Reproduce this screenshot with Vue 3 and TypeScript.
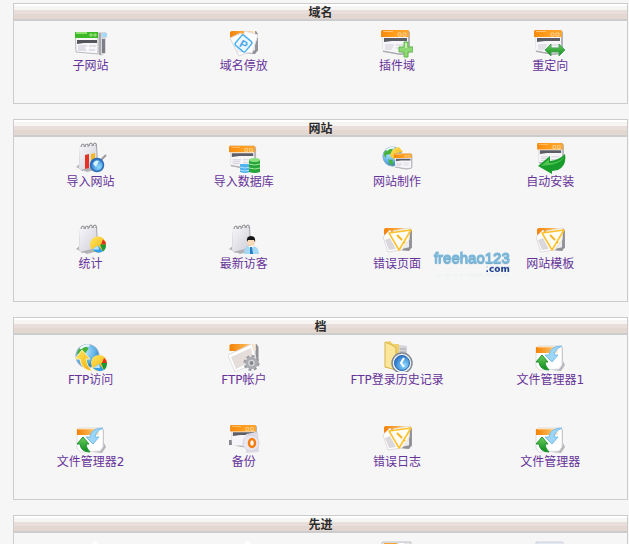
<script setup lang="ts">
interface Tool {
  icon: string
  label?: string
}

interface Section {
  title: string
  tools: Tool[]
  watermark?: boolean
}

const sections: Section[] = [
  {
    title: '域名',
    tools: [
      { icon: 'subsite', label: '子网站' },
      { icon: 'parked', label: '域名停放' },
      { icon: 'addon', label: '插件域' },
      { icon: 'redirect', label: '重定向' },
    ],
  },
  {
    title: '网站',
    watermark: true,
    tools: [
      { icon: 'import-site', label: '导入网站' },
      { icon: 'import-db', label: '导入数据库' },
      { icon: 'builder', label: '网站制作' },
      { icon: 'installer', label: '自动安装' },
      { icon: 'stats', label: '统计' },
      { icon: 'visitors', label: '最新访客' },
      { icon: 'error', label: '错误页面' },
      { icon: 'error', label: '网站模板' },
    ],
  },
  {
    title: '档',
    tools: [
      { icon: 'ftp', label: 'FTP访问' },
      { icon: 'ftp-account', label: 'FTP帐户' },
      { icon: 'ftp-history', label: 'FTP登录历史记录' },
      { icon: 'files', label: '文件管理器1' },
      { icon: 'files', label: '文件管理器2' },
      { icon: 'backup', label: '备份' },
      { icon: 'error', label: '错误日志' },
      { icon: 'files', label: '文件管理器' },
    ],
  },
  {
    title: '先进',
    tools: [{ icon: 'paper' }, { icon: 'paper' }, { icon: 'window-low' }, { icon: 'sheet' }],
  },
]
</script>

<template>
  <svg class="sprite" width="0" height="0" aria-hidden="true">
    <defs>
      <linearGradient id="g-orange" x1="0" y1="0" x2="1" y2="0">
        <stop offset="0" stop-color="#f68a0c" />
        <stop offset="0.5" stop-color="#ff9e1e" />
        <stop offset="1" stop-color="#f9a636" />
      </linearGradient>
      <linearGradient id="g-corner" x1="0" y1="0" x2="1" y2="0">
        <stop offset="0" stop-color="#f58205" />
        <stop offset="0.6" stop-color="#fbb04c" />
        <stop offset="1" stop-color="#fff1dc" />
      </linearGradient>
      <linearGradient id="g-green" x1="0" y1="0" x2="0" y2="1">
        <stop offset="0" stop-color="#6fce5c" />
        <stop offset="1" stop-color="#0a8a1c" />
      </linearGradient>
      <linearGradient id="g-yellow" x1="0" y1="0" x2="1" y2="1">
        <stop offset="0" stop-color="#ffe95e" />
        <stop offset="1" stop-color="#f2a90c" />
      </linearGradient>
      <linearGradient id="g-page" x1="0" y1="0" x2="1" y2="1">
        <stop offset="0" stop-color="#f7f7fa" />
        <stop offset="1" stop-color="#d0ced8" />
      </linearGradient>
      <radialGradient id="g-globe" cx="0.35" cy="0.3" r="0.8">
        <stop offset="0" stop-color="#bfe9ff" />
        <stop offset="0.6" stop-color="#5fb2e8" />
        <stop offset="1" stop-color="#1d62b4" />
      </radialGradient>
      <radialGradient id="g-lens" cx="0.65" cy="0.65" r="0.8">
        <stop offset="0" stop-color="#8fdcff" />
        <stop offset="1" stop-color="#1560c0" />
      </radialGradient>
    </defs>

    <symbol id="window" viewBox="0 0 30 27">
      <path d="M1 1h26l2 2v20l-2 2-8 1-17-3z" fill="#b4b4b8" />
      <path d="M1 1h26v23l-8 1-17-3z" fill="#f6f5f8" />
      <path d="M0 2l1-1h26l1 1v6H0z" fill="url(#g-orange)" />
      <path d="M2 2h10v1H2z" fill="#ffc377" />
      <path d="M17 4h3v3h-3zM22 4h3v3h-3z" fill="none" stroke="#ffd08a" />
      <path d="M3 9h23v3H11l-8 1z" fill="#5d5e65" />
      <path d="M4 16h9M4 18h8M4 20h7M15 16h9M15 19h8" stroke="#d2cdda" fill="none" />
      <path d="M2 22l17 3 8-1" stroke="#a7a6ab" fill="none" />
    </symbol>

    <symbol id="card" viewBox="0 0 30 27">
      <path d="M2 1h26l2 3v17l-3 4-12-1z" fill="#909196" />
      <path d="M2 1h25v20l-9 2z" fill="#ececef" />
      <path d="M1 2l2-1h24v7H1z" fill="url(#g-corner)" />
    </symbol>

    <symbol id="notepad" viewBox="0 0 32 32">
      <path d="M1 25l6-5 16 7-11 3z" fill="#b3b2b7" />
      <path d="M5 5l17-2 1 19-16 7-3-3z" fill="#a3a2a9" />
      <path d="M5 4l16-1 1 17-5 5-11 3-2-2z" fill="url(#g-page)" />
      <path d="M6 5q0-3 2-3t1 3M10 5q0-3 2-3t1 3M14 4q0-3 2-3t1 3M18 4q0-3 2-3t1 3" fill="none" stroke="#85848b" />
    </symbol>

    <symbol id="pie" viewBox="0 0 18 18">
      <circle cx="9" cy="9" r="8" fill="url(#g-yellow)" />
      <path d="M12 9l2-5q3 2 3 5z" fill="#e0301c" />
      <path d="M11 9h6q0 5-3 7z" fill="#189a38" />
      <path d="M9 10l5 6q-6 3-11-2z" fill="#35a0ea" />
      <path d="M3 14l6-4 1 4z" fill="#b9e4ff" />
    </symbol>

    <symbol id="subsite" viewBox="0 0 32 32">
      <path d="M23 6h8v21l-5 3-3-2z" fill="#d8d8db" />
      <path d="M27 7h5v4h-5z" fill="#a5d8fa" />
      <path d="M27 13h3v14h-3z" fill="#7d7f86" />
      <path d="M24 7h2v22h-2z" fill="#a8a9ae" />
      <path d="M0 7h23v21L1 26z" fill="#f7f6f9" stroke="#bcbabf" />
      <path d="M0 6h23v6H0z" fill="#3db826" />
      <path d="M1 6h11v2H1z" fill="#8be070" />
      <path d="M15 8h2v2h-2zM19 8h2v2h-2z" fill="none" stroke="#a2e48b" />
      <path d="M2 14h20v3H9l-7 1z" fill="#53545c" />
      <path d="M3 20h9M3 22h7M3 24h8M14 20h7M14 24h6" stroke="#cbc5d6" fill="none" />
    </symbol>

    <symbol id="parked" viewBox="0 0 32 32">
      <use href="#card" x="1" y="4" width="29" height="26" />
      <path d="M2 12l11-5 13 17-15 6z" fill="#fff" stroke="#d8d6da" />
      <path d="M17 5l13 4-6 18-15-2z" fill="#fdfdff" stroke="#e2e1e5" />
      <rect x="9" y="11" width="13" height="13" rx="2" transform="rotate(40 15.5 17.5)" fill="#eef8ff" stroke="#4fb2ee" stroke-width="1.5" />
      <text x="12" y="22" transform="rotate(30 15 18)" class="glyph" fill="#4aa5e8">P</text>
    </symbol>

    <symbol id="addon" viewBox="0 0 32 32">
      <use href="#window" x="0" y="3" width="30" height="27" />
      <path d="M23 16h4v5h5v5h-5v5h-4v-5h-5v-5h5z" fill="#8ed873" stroke="#63b850" />
      <path d="M24 17h2v5h-2z" fill="#c4f0b0" />
    </symbol>

    <symbol id="redirect" viewBox="0 0 32 32">
      <use href="#window" x="0" y="3" width="30" height="27" />
      <path d="M11 24l6-6v4h8v-4l6 6-6 6v-4h-8v4z" fill="url(#g-green)" stroke="#4fa263" />
    </symbol>

    <symbol id="import-site" viewBox="0 0 32 32">
      <use href="#notepad" width="32" height="32" />
      <path d="M10 13l4-1v14l-4 1z" fill="#e63222" />
      <path d="M16 12l4-1v8l-4 3z" fill="#f7b51e" />
      <path d="M26 18l5-5" stroke="#9a9ba1" stroke-width="2" />
      <circle cx="22" cy="23" r="6.5" fill="url(#g-lens)" stroke="#2b6cb5" stroke-width="1.5" />
      <path d="M18 22q2-5 6-3l-3 6z" fill="#d8f4ff" />
    </symbol>

    <symbol id="import-db" viewBox="0 0 32 32">
      <use href="#window" x="1" y="2" width="28" height="27" />
      <path d="M12 22h10v8q-5 2-10 0z" fill="#4fb1ee" />
      <path d="M12 25q5 2 10 0M12 28q5 2 10 0" fill="none" stroke="#a9defc" />
      <path d="M21 18h11v12q-5 2-11 0z" fill="#24a43a" />
      <ellipse cx="26.500" cy="18" rx="5.500" ry="2" fill="#88df7c" />
      <path d="M21 22q6 2 11 0M21 26q6 2 11 0" fill="none" stroke="#a4e698" />
    </symbol>

    <symbol id="globe" viewBox="0 0 24 24">
      <circle cx="12" cy="12" r="11" fill="url(#g-globe)" stroke="#86a9c8" />
      <path d="M2 9q2-6 8-7l3 3-3 4-5 1-1 4zM7 15l5 1 1 6-4-1z" fill="#46b23c" />
      <path d="M5 5q4-4 9-3" fill="none" stroke="#f0fbff" stroke-width="2" />
    </symbol>

    <symbol id="builder" viewBox="0 0 32 32">
      <use href="#globe" x="1" y="4" width="21" height="21" />
      <path d="M9 14q1-8 9-9l4 5-6 1-2 7z" fill="url(#g-yellow)" />
      <use href="#window" x="13" y="10" width="19" height="19" />
    </symbol>

    <symbol id="installer" viewBox="0 0 32 32">
      <use href="#window" x="2" y="0" width="30" height="25" />
      <path d="M4 24l12-10v5q9-1 15-7 2 12-7 16l-6 1v3z" fill="#189d2c" />
      <path d="M7 24l8-7v4q9 0 15-6-3 6-14 8z" fill="#50c451" />
    </symbol>

    <symbol id="stats" viewBox="0 0 32 32">
      <use href="#notepad" width="32" height="32" />
      <use href="#pie" x="14" y="11" width="18" height="19" />
    </symbol>

    <symbol id="visitors" viewBox="0 0 32 32">
      <use href="#notepad" width="32" height="32" />
      <path d="M16 30q0-8 5-8h4q6 1 6 8z" fill="#a5d8f3" />
      <path d="M20 22l3 3 3-3z" fill="#fff" />
      <path d="M22 23h2l1 7h-3z" fill="#247cc6" />
      <circle cx="23" cy="18" r="4" fill="#f8d9b8" />
      <path d="M19 18q-1-6 4-6t4 6l-1-2h-6z" fill="#17171a" />
    </symbol>

    <symbol id="error" viewBox="0 0 32 32">
      <use href="#card" x="2" y="3" width="29" height="26" />
      <path d="M2 13l7-7 11 20-13 2z" fill="#fff" stroke="#dddce0" />
      <path d="M12 7l17-3-1 12-8 11z" fill="#fffaf0" stroke="#e7e2da" />
      <path d="M4 16l5-2 6 11-7 1z" fill="#dbd8dd" />
      <path d="M8 9l22-3-12 20z" fill="#fffdf4" stroke="#fbc02c" stroke-width="1.5" stroke-linejoin="round" />
      <path d="M16 11l5 5M23 18l1 1" stroke="#f9b524" stroke-width="2" />
    </symbol>

    <symbol id="ftp" viewBox="0 0 32 32">
      <use href="#globe" x="0" y="3" width="25" height="26" />
      <use href="#pie" x="15" y="14" width="18" height="18" />
      <path d="M7 10l8 9h-4q0 6 6 12-11-1-12-12H0z" fill="url(#g-yellow)" stroke="#fff3b5" />
    </symbol>

    <symbol id="gear" viewBox="0 0 18 18">
      <circle cx="9" cy="9" r="7" fill="none" stroke="#9a9ba0" stroke-width="3" stroke-dasharray="3 2.500" />
      <circle cx="9" cy="9" r="5" fill="#d5d5d8" stroke="#abacb1" stroke-width="3" />
      <circle cx="9" cy="9" r="2" fill="#85868c" />
    </symbol>

    <symbol id="ftp-account" viewBox="0 0 32 32">
      <use href="#card" x="0" y="3" width="31" height="27" />
      <path d="M0 15l24-11 5 18-22 10z" fill="#fff" stroke="#e1e0e4" />
      <path d="M3 17l20-9 3 12-18 9z" fill="#e4ddda" />
      <use href="#gear" x="15" y="14" width="17" height="18" />
    </symbol>

    <symbol id="ftp-history" viewBox="0 0 32 32">
      <path d="M18 5l8 1v17l-8 2z" fill="#d5d4d8" />
      <path d="M19 9h6M19 12h6" stroke="#a9a8ae" />
      <path d="M4 2l5-1 3 3h6v24H4z" fill="#efd06c" />
      <path d="M4 2l7 3 4 3v22l-11-3z" fill="#fbe69a" stroke="#d7b44d" />
      <circle cx="21" cy="23" r="10" fill="#f3f3f4" stroke="#838b96" stroke-width="1.500" />
      <circle cx="21" cy="23" r="7.500" fill="url(#g-lens)" stroke="#2a67b0" />
      <path d="M23 18l-3 5 3 4" fill="none" stroke="#fff" stroke-width="2" />
    </symbol>

    <symbol id="files" viewBox="0 0 32 32">
      <path d="M4 6h23l2 2v13l2 4-4 6-19-2z" fill="#b5b6ba" />
      <path d="M2 8l2-2h22l2 2v17l-3 4-20 1-3-4z" fill="#fff" stroke="#dedde1" />
      <path d="M2 7h22v6H2z" fill="url(#g-corner)" />
      <path d="M3 7h20" stroke="#ffd9a0" />
      <path d="M28 6q-12 0-13 9h-4l7 7 6-7h-4q1-6 8-9z" fill="#9bd5f7" stroke="#7bbde9" />
      <path d="M8 15l6 7h-3q0 4 4 8-9 0-10-8H2z" fill="url(#g-green)" stroke="#239535" />
    </symbol>

    <symbol id="backup" viewBox="0 0 32 32">
      <path d="M1 18h14v5H1z" fill="#85868b" />
      <use href="#window" x="2" y="2" width="28" height="25" />
      <path d="M4 15l14-1v9l-14 1z" fill="#f5f4f8" />
      <path d="M18 12l12-2 1 20-13 1z" fill="#dedbe6" />
      <circle cx="23" cy="21" r="8" fill="#e9e6ef" stroke="#d8d5df" />
      <ellipse cx="24" cy="21" rx="3" ry="4" fill="#fff" stroke="#f57c13" stroke-width="2.500" />
    </symbol>

    <symbol id="paper" viewBox="0 0 32 32">
      <path d="M16 6l4-3 3 3v20h-7z" fill="#fff" />
    </symbol>

    <symbol id="window-low" viewBox="0 0 32 32">
      <path d="M1 4h29v24H1z" fill="#e6e5e9" stroke="#c4c3c9" />
      <path d="M3 5h13v4H3z" fill="#f6a62f" />
      <path d="M18 5h5v4h-5z" fill="#fff" />
    </symbol>

    <symbol id="sheet" viewBox="0 0 32 32">
      <path d="M2 4h27v24H2z" fill="#dfeaf5" stroke="#d3d2d8" />
    </symbol>
  </svg>

  <main class="page">
    <section v-for="section in sections" :key="section.title" class="panel">
      <h2 class="title">{{ section.title }}</h2>
      <div class="tools">
        <a v-for="(tool, i) in section.tools" :key="i" class="tool" href="#">
          <svg class="icon" viewBox="0 0 32 32" aria-hidden="true"><use :href="'#' + tool.icon" /></svg>
          <span v-if="tool.label">{{ tool.label }}</span>
        </a>
      </div>
      <div v-if="section.watermark" class="watermark">
        <span class="brand">freehao123</span>
        <span class="suffix">.com</span>
      </div>
    </section>
  </main>
</template>

<style>
html,
body {
  background: #f6f6f6;
}
</style>

<style scoped>
.sprite {
  position: absolute;
}

.glyph {
  font: bold 11px "Liberation Sans", sans-serif;
}

.page {
  box-sizing: border-box;
  height: 100vh;
  overflow: hidden;
  padding: 3px 1px 0 13px;
  display: flex;
  flex-direction: column;
  gap: 15px;
  font-family: "DejaVu Sans", "Noto Sans CJK SC", sans-serif;
  font-size: 12px;
}

.panel {
  position: relative;
  flex: none;
  border: 1px solid #ccc;
}

.title {
  margin: 0;
  padding-top: 2px;
  background: linear-gradient(#fff 2px, #f6f5f4 2px 6px, #e9deda 6px 10px, #e3d7d1 10px 15px, #ccc 15px);
  color: #2b2b2b;
  font-size: 12px;
  line-height: 15px;
  text-align: center;
}

.tools {
  display: grid;
  grid-template-columns: repeat(4, 1fr);
  grid-auto-rows: 82px;
}

.tool {
  display: flex;
  flex-direction: column;
  align-items: center;
  padding-top: 5px;
  color: #639;
  line-height: 16px;
  text-decoration: none;
  white-space: nowrap;
}

.icon {
  flex: none;
  width: 32px;
  height: 32px;
}

.watermark {
  position: absolute;
  top: 130px;
  left: 68.5%;
  display: flex;
  flex-direction: column;
  align-items: flex-end;
  font-family: "Liberation Sans", sans-serif;
  -webkit-box-reflect: below -8px linear-gradient(transparent 40%, rgba(0, 0, 0, 0.2));
}

.brand {
  color: #6fb0d6;
  font-size: 15px;
  line-height: 16px;
  -webkit-text-stroke: 1px #7db9da;
  text-shadow: 0 1px 1px #4a87ae;
}

.suffix {
  margin-top: -1px;
  color: #1d3f8f;
  font-family: "DejaVu Sans", sans-serif;
  font-size: 9px;
  font-weight: bold;
  line-height: 8px;
}
</style>
